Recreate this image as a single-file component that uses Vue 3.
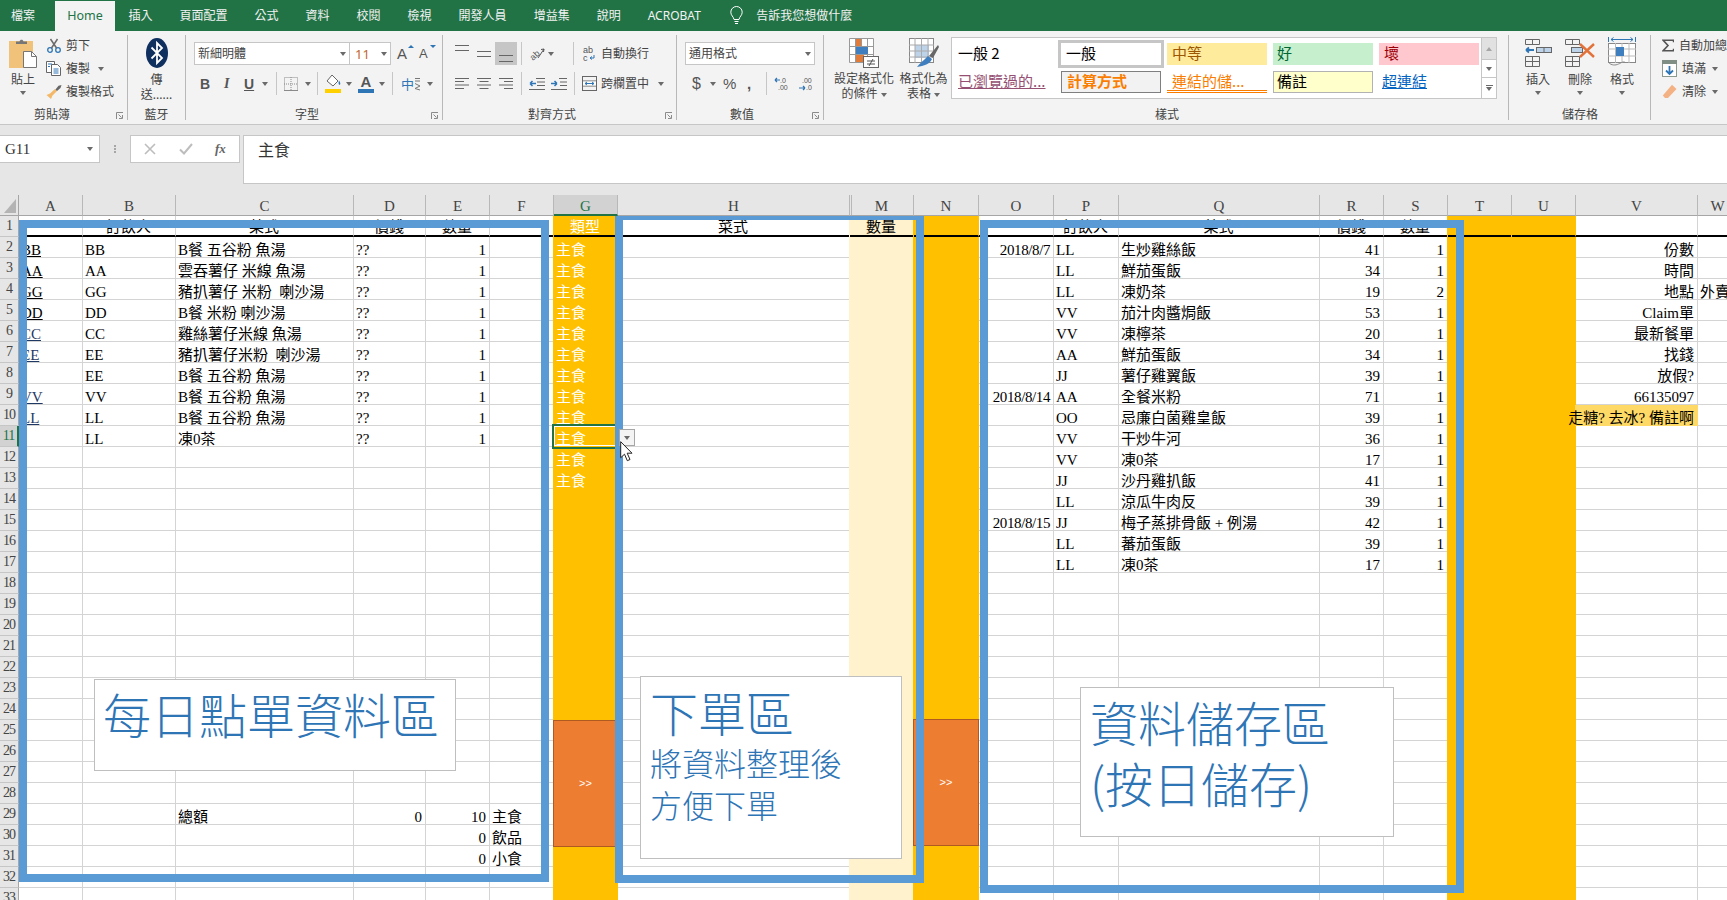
<script setup>
const cols = [
  ['A', 64], ['B', 93], ['C', 178], ['D', 72], ['E', 64], ['F', 64], ['G', 64], ['H', 232], ['M', 64], ['N', 65],
  ['O', 75], ['P', 65], ['Q', 201], ['R', 64], ['S', 64], ['T', 64], ['U', 64], ['V', 122], ['W', 40]
]
const gridCols = { gridTemplateColumns: '19px ' + cols.map((c) => c[1] + 'px').join(' ') }
const left = [
  ['BB', 'BB', 'B餐 五谷粉 魚湯'], ['AA', 'AA', '雲吞薯仔 米線 魚湯'], ['GG', 'GG', '豬扒薯仔 米粉  喇沙湯'],
  ['DD', 'DD', 'B餐 米粉 喇沙湯'], ['CC', 'CC', '雞絲薯仔米線 魚湯'], ['EE', 'EE', '豬扒薯仔米粉  喇沙湯'],
  ['', 'EE', 'B餐 五谷粉 魚湯'], ['VV', 'VV', 'B餐 五谷粉 魚湯'], ['LL', 'LL', 'B餐 五谷粉 魚湯'], ['', 'LL', '凍0茶']
]
const right = [
  ['2018/8/7', 'LL', '生炒雞絲飯', '41', '1'], ['', 'LL', '鮮茄蛋飯', '34', '1'], ['', 'LL', '凍奶茶', '19', '2'],
  ['', 'VV', '茄汁肉醬焗飯', '53', '1'], ['', 'VV', '凍檸茶', '20', '1'], ['', 'AA', '鮮茄蛋飯', '34', '1'],
  ['', 'JJ', '薯仔雞翼飯', '39', '1'], ['2018/8/14', 'AA', '全餐米粉', '71', '1'], ['', 'OO', '忌廉白菌雞皇飯', '39', '1'],
  ['', 'VV', '干炒牛河', '36', '1'], ['', 'VV', '凍0茶', '17', '1'], ['', 'JJ', '沙丹雞扒飯', '41', '1'],
  ['', 'LL', '涼瓜牛肉反', '39', '1'], ['2018/8/15', 'JJ', '梅子蒸排骨飯 + 例湯', '42', '1'], ['', 'LL', '蕃茄蛋飯', '39', '1'],
  ['', 'LL', '凍0茶', '17', '1']
]
const sideV = ['份數', '時間', '地點', 'Claim單', '最新餐單', '找錢', '放假?', '66135097', '走糖? 去冰? 備註啊']

const data = {
  1: { B: '訂飲人', C: '菜式', D: '價錢', E: '數量', G: '類型', H: '菜式', M: '數量', P: '訂飲人', Q: '菜式', R: '價錢', S: '數量' },
  29: { C: '總額', D: '0', E: '10', F: '主食' },
  30: { E: '0', F: '飲品' },
  31: { E: '0', F: '小食' }
}
const put = (r, k, v) => { if (v !== '') { (data[r] = data[r] || {})[k] = v } }
left.forEach((x, i) => { put(i + 2, 'A', x[0]); put(i + 2, 'B', x[1]); put(i + 2, 'C', x[2]); put(i + 2, 'D', '??'); put(i + 2, 'E', '1') })
for (let r = 2; r <= 13; r++) put(r, 'G', '主食')
right.forEach((x, i) => { ['O', 'P', 'Q', 'R', 'S'].forEach((k, j) => put(i + 2, k, x[j])) })
sideV.forEach((t, i) => put(i + 2, 'V', t))
put(4, 'W', '外賣')

const rows = Array.from({ length: 33 }, (_, i) => i + 1)
const text = (r, k) => (data[r] && data[r][k]) || ''
const cellClass = (r, k) => {
  const t = text(r, k)
  return {
    head: r === 1,
    right: r > 1 && (/^[\d/]+$/.test(t) || k === 'V'),
    date: k === 'O',
    gold: k === 'G' || k === 'N' || k === 'T' || k === 'U',
    pale: k === 'M',
    note: k === 'V' && r === 10,
    link: k === 'A' && r > 1,
    navy: k === 'A' && r > 5,
    sel: k === 'G' && r === 11
  }
}
</script>

<template>
  <div class="app">
    <nav class="tabs">
      <span class="tab first">檔案</span>
      <span class="tab home">Home</span>
      <span class="tab">插入</span>
      <span class="tab">頁面配置</span>
      <span class="tab">公式</span>
      <span class="tab">資料</span>
      <span class="tab">校閱</span>
      <span class="tab">檢視</span>
      <span class="tab">開發人員</span>
      <span class="tab">增益集</span>
      <span class="tab">說明</span>
      <span class="tab">ACROBAT</span>
      <svg class="bulb" width="13" height="19" viewBox="0 0 13 19" fill="none" stroke="#fff"><path d="M4 13.5C3.5 10.5.8 9.500.8 6.200a5.700 5.700 0 0 1 11.400 0c0 3.300-2.700 4.300-3.200 7.300z" /><path d="M4.500 15.500h4M5 17.500h3" /></svg>
      <span class="tell">告訴我您想做什麼</span>
    </nav>

    <section class="ribbon">
      <!-- 剪貼簿 -->
      <div class="group w-clip">
        <div class="body flex">
          <div class="bigbtn w46">
            <svg class="mt4" width="28" height="29" viewBox="0 0 28 29">
              <rect x="0" y="2" width="24" height="27" fill="#f1c27a" />
              <path d="M7 5V2.500h3.500C11 0 14 0 14.500 2.500H18V5z" fill="#767676" />
              <path d="M14.500 12.500h8l5 5v11h-13z" fill="#fff" stroke="#767676" />
              <path d="M22.500 12.500v5h5" fill="none" stroke="#767676" />
            </svg>
            <span class="mt4 tl">貼上</span>
            <i class="caret mt4"></i>
          </div>
          <div class="stack">
            <div class="row23">
              <svg width="16" height="15" viewBox="0 0 16 15" fill="none"><circle cx="4" cy="12" r="2.300" stroke="#2e75b6" stroke-width="1.300" /><circle cx="12" cy="12" r="2.300" stroke="#2e75b6" stroke-width="1.300" /><path d="M5.500 10 11.500 1M10.500 10 4.500 1" stroke="#6a6a6a" stroke-width="1.500" /></svg>
              <span class="ml-4">剪下</span>
            </div>
            <div class="row23">
              <svg width="16" height="15" viewBox="0 0 16 15" fill="#fff" stroke="#666"><path d="M.5.500h8v11h-8z" /><path d="M5.500 3.500h6l3 3v8h-9z" /><path d="M7.500 8h5M7.500 10h5M7.500 12h5M2 3h4M2 5.500h2" stroke="#2e75b6" fill="none" /></svg>
              <span class="ml-4">複製</span><i class="caret ml-8"></i>
            </div>
            <div class="row23">
              <svg width="16" height="15" viewBox="0 0 16 15"><path d="M9 5 4 9.500.5 11 5 15l1.500-3.500L11 7z" fill="#f4b869" /><path d="M9.500 5.500 11 7l3.500-3 1-3-3 .8z" fill="#666" /></svg>
              <span class="ml-4">複製格式</span>
            </div>
          </div>
        </div>
        <div class="label ml-34">剪貼簿</div>
        <svg class="launch" width="7" height="7" viewBox="0 0 7 7" fill="none" stroke="#8a8a8a"><path d="M.5 7V.5H7M2.500 2.500l3 3M6.500 3v3.500H3" /></svg>
      </div>

      <!-- 藍牙 -->
      <div class="group w-bt">
        <div class="body">
          <div class="bigbtn">
            <svg class="mt3" width="22" height="30" viewBox="0 0 22 30"><ellipse cx="11" cy="15" rx="11" ry="15" fill="#0f2f5f" /><path d="M5.500 9.500 16 20l-5 5V5l5 5L5.500 20.500" fill="none" stroke="#fff" stroke-width="1.800" /></svg>
            <span class="mt4 tl">傳</span>
            <span class="tl">送......</span>
          </div>
        </div>
        <div class="label center">藍牙</div>
      </div>

      <!-- 字型 -->
      <div class="group w-font">
        <div class="body">
          <div class="rowA">
            <div class="combo w156 ml-8"><span>新細明體</span><i class="caret"></i></div>
            <div class="combo w41 joined"><span class="orange">11</span><i class="caret"></i></div>
            <span class="gauge big ml-6">A<i class="tri up"></i></span>
            <span class="gauge small ml-9">A<i class="tri down"></i></span>
          </div>
          <div class="rowB">
            <b class="fmt ml-14 w9">B</b>
            <i class="fmt serif ml-15 w7">I</i>
            <u class="fmt ml-13 w10">U</u>
            <i class="caret ml-8"></i>
            <i class="vsep ml-8"></i>
            <svg class="ml-7" width="14" height="14" viewBox="0 0 14 14" fill="none" stroke="#8a8a8a" stroke-dasharray="1 1"><path d="M.5.500h13v13H.5zM7 0v14M0 7h14" /><path d="M0 13.500h14" stroke-dasharray="none" /></svg>
            <i class="caret ml-7"></i>
            <i class="vsep ml-6"></i>
            <svg class="ml-7" width="16" height="19" viewBox="0 0 16 19"><path d="M7 1 13 7 8 12 2 7z" fill="#fff" stroke="#666" /><path d="M14 6.500c1.500 2 1.800 4 .5 4.500-1.200-.5-1.200-2.500-.5-4.500z" fill="#2e75b6" /><rect y="15" width="16" height="4" fill="#ffd000" /></svg>
            <i class="caret ml-5"></i>
            <span class="fontcolor ml-6">A<i></i></span>
            <i class="caret ml-5"></i>
            <i class="vsep ml-7"></i>
            <span class="zh ml-8">中</span>
            <svg width="7" height="14" viewBox="0 0 7 14" fill="none" stroke="#777"><path d="M1 1.500h5M1 4h5M1 6.500l5 2.500M6 9 1 11.500 6 13" /></svg>
            <i class="caret ml-6"></i>
          </div>
        </div>
        <div class="label ml-109">字型</div>
        <svg class="launch" width="7" height="7" viewBox="0 0 7 7" fill="none" stroke="#8a8a8a"><path d="M.5 7V.5H7M2.500 2.500l3 3M6.500 3v3.500H3" /></svg>
      </div>

      <!-- 對齊方式 -->
      <div class="group w-align">
        <div class="body">
          <div class="rowA">
            <svg class="ml-12" width="14" height="23" viewBox="0 0 14 23" stroke="#666"><path d="M0 3.500h14M0 8.500h14" /></svg>
            <svg class="ml-8" width="14" height="23" viewBox="0 0 14 23" stroke="#666"><path d="M0 9.500h14M0 14.500h14" /></svg>
            <span class="selbtn ml-4"><svg width="14" height="23" viewBox="0 0 14 23" stroke="#666"><path d="M0 13.500h14M0 19.500h14" /></svg></span>
            <i class="vsep ml-4"></i>
            <svg class="ml-7" width="16" height="16" viewBox="0 0 16 16"><text x="1" y="13" font-size="9" font-family="Liberation Sans" fill="#555" transform="rotate(-42 5 10)">ab</text><path d="M9 12 15 3M15 3l-3 .5M15 3l-.5 3" fill="none" stroke="#555" /></svg>
            <i class="caret ml-3"></i>
            <i class="vsep ml-19"></i>
            <svg class="ml-9" width="12" height="16" viewBox="0 0 12 16"><text x="0" y="7" font-size="9" font-family="Liberation Sans" fill="#555">ab</text><text x="0" y="15" font-size="9" font-family="Liberation Sans" fill="#555">c</text><path d="M11 9v3H7M7 12l2-1.500M7 12l2 1.500" fill="none" stroke="#2e75b6" /></svg>
            <span class="ml-6">自動換行</span>
          </div>
          <div class="rowB">
            <svg class="ml-12" width="14" height="11" viewBox="0 0 14 11" stroke="#666"><path d="M0 .5h14M0 3.500h9M0 7h14M0 10.500h9" /></svg>
            <svg class="ml-8" width="14" height="11" viewBox="0 0 14 11" stroke="#666"><path d="M0 .5h14M2.500 3.500h9M0 7h14M2.500 10.500h9" /></svg>
            <svg class="ml-8" width="14" height="11" viewBox="0 0 14 11" stroke="#666"><path d="M0 .5h14M5 3.500h9M0 7h14M5 10.500h9" /></svg>
            <i class="vsep ml-8"></i>
            <svg class="ml-7" width="16" height="12" viewBox="0 0 16 12" fill="none"><path d="M7 .5h9M8 4h8M8 7.500h8M0 11.500h16" stroke="#666" /><path d="M7 5.500H1M1 5.500l2.500-2.500M1 5.500l2.500 2.500" stroke="#2e75b6" stroke-width="1.500" /></svg>
            <svg class="ml-6" width="16" height="12" viewBox="0 0 16 12" fill="none"><path d="M8 .5h8M9 4h7M9 7.500h7M0 11.500h16" stroke="#666" /><path d="M0 5.500h6M6 5.500 3.500 3M6 5.500 3.500 8" stroke="#2e75b6" stroke-width="1.500" /></svg>
            <i class="vsep ml-7"></i>
            <svg class="ml-7" width="15" height="15" viewBox="0 0 15 15" fill="none"><rect x=".5" y=".5" width="14" height="14" stroke="#666" /><path d="M0 5h15M0 10h15" stroke="#666" /><rect x="1" y="5.500" width="13" height="4" fill="#fff" /><path d="M3 7.500h9M3 7.500l2-1.500M3 7.500 5 9M12 7.500l-2-1.500M12 7.500 10 9" stroke="#2e75b6" /></svg>
            <span class="ml-4">跨欄置中</span>
            <i class="caret ml-9"></i>
          </div>
        </div>
        <div class="label ml-85">對齊方式</div>
        <svg class="launch" width="7" height="7" viewBox="0 0 7 7" fill="none" stroke="#8a8a8a"><path d="M.5 7V.5H7M2.500 2.500l3 3M6.500 3v3.500H3" /></svg>
      </div>

      <!-- 數值 -->
      <div class="group w-num">
        <div class="body">
          <div class="rowA"><div class="combo w130 ml-8"><span>通用格式</span><i class="caret"></i></div></div>
          <div class="rowB">
            <span class="money ml-15">$</span>
            <i class="caret ml-8"></i>
            <span class="money pct ml-7">%</span>
            <b class="comma ml-10">,</b>
            <i class="vsep ml-13"></i>
            <svg class="ml-7" width="15" height="14" viewBox="0 0 15 14"><text x="6" y="6" font-size="7" font-family="Liberation Sans" fill="#555">.0</text><text x="4" y="13" font-size="7" font-family="Liberation Sans" fill="#555">.00</text><path d="M6 3H1M1 3l2-2M1 3l2 2" fill="none" stroke="#2e75b6" stroke-width="1.200" /></svg>
            <svg class="ml-10" width="14" height="14" viewBox="0 0 14 14"><text x="3" y="6" font-size="7" font-family="Liberation Sans" fill="#555">.00</text><text x="7" y="13" font-size="7" font-family="Liberation Sans" fill="#555">.0</text><path d="M0 11h6M6 11 4 9M6 11l-2 2" fill="none" stroke="#2e75b6" stroke-width="1.200" /></svg>
          </div>
        </div>
        <div class="label ml-53">數值</div>
        <svg class="launch" width="7" height="7" viewBox="0 0 7 7" fill="none" stroke="#8a8a8a"><path d="M.5 7V.5H7M2.500 2.500l3 3M6.500 3v3.500H3" /></svg>
      </div>

      <!-- 樣式 -->
      <div class="group w-style">
        <div class="body flex">
          <div class="bigbtn w60 ml-10">
            <svg class="mt3" width="30" height="30" viewBox="0 0 30 30">
              <path d="M.5.500h24v24H.5zM.5 8.500h24M.5 16.500h24M6.500 0v25M12.500 0v25M18.500 0v25" fill="#fff" stroke="#999" />
              <rect x="7" y="1" width="5" height="7" fill="#e07b39" /><rect x="7" y="9" width="12" height="7" fill="#3f7fbf" /><rect x="7" y="17" width="8" height="7" fill="#e07b39" />
              <rect x="14.500" y="18.500" width="15" height="11" fill="#fff" stroke="#666" />
              <path d="M18 23h8M18 26h8M24 21l-4 7" fill="none" stroke="#555" />
            </svg>
            <span class="mt3 tl">設定格式化</span>
            <span class="tl">的條件<i class="caret ml-3"></i></span>
          </div>
          <div class="bigbtn w47 ml-6">
            <svg class="mt3" width="30" height="30" viewBox="0 0 30 30">
              <rect x=".5" y=".5" width="24" height="24" fill="#fff" stroke="#888" />
              <rect x="6" y="7" width="14" height="13" fill="#bdd3ea" />
              <path d="M0 7h25M0 13h25M0 19h25M6 0v25M12.500 0v25M19 0v25" stroke="#aaa" fill="none" />
              <path d="M20 18 29 7l1 2-6 11z" fill="#666" />
              <path d="M19 18l4 3c-2 5-8 7-15 8 2-3 6-6 11-11z" fill="#3f7fbf" />
            </svg>
            <span class="mt3 tl">格式化為</span>
            <span class="tl">表格<i class="caret ml-3"></i></span>
          </div>
          <div class="gallery ml-4">
            <div class="styles">
              <span class="st plain">一般 2</span>
              <span class="st chosen">一般</span>
              <span class="st neutral">中等</span>
              <span class="st good">好</span>
              <span class="st bad">壞</span>
              <span class="st visited">已瀏覽過的...</span>
              <span class="st calc">計算方式</span>
              <span class="st linked">連結的儲...</span>
              <span class="st memo">備註</span>
              <span class="st hyper">超連結</span>
            </div>
            <div class="scroller">
              <span class="sb up"><i class="tri-g"></i></span>
              <span class="sb mid"><i class="caret"></i></span>
              <span class="sb end"><i class="bar"></i><i class="caret"></i></span>
            </div>
          </div>
        </div>
        <div class="label ml-331">樣式</div>
      </div>

      <!-- 儲存格 -->
      <div class="group w-cell">
        <div class="body flex pl8">
          <div class="bigbtn w42">
            <svg class="mt4" width="27" height="28" viewBox="0 0 27 28" fill="none" stroke="#666">
              <path d="M.5.500h14v5H.5zM7.500 0v6M.5 17.500h14v10H.5zM.5 22.500h14M7.500 17v11" />
              <rect x="11.500" y="8.500" width="15" height="5" fill="#bdd3ea" /><path d="M19 8v6" />
              <path d="M9 11H1M1 11l3-2.500M1 11l3 2.500" stroke="#2e75b6" stroke-width="1.800" />
            </svg>
            <span class="mt5 tl">插入</span>
            <i class="caret mt4"></i>
          </div>
          <div class="bigbtn w42">
            <svg class="mt4" width="30" height="28" viewBox="0 0 30 28" fill="none" stroke="#666">
              <path d="M.5.500h14v5H.5zM7.500 0v6M.5 17.500h14v10H.5zM.5 22.500h14M7.500 17v11" />
              <rect x="6.500" y="8.500" width="11" height="5" fill="#bdd3ea" />
              <path d="M15 5l14 13M29 5 15 18" stroke="#e2723a" stroke-width="2.400" />
            </svg>
            <span class="mt5 tl">刪除</span>
            <i class="caret mt4"></i>
          </div>
          <div class="bigbtn w42">
            <svg class="mt2" width="28" height="30" viewBox="0 0 28 30" fill="none" stroke="#888">
              <path d="M.5 0v5M27.500 0v5M3 2.500h22M3 2.500l2.500-2M3 2.500l2.500 2M25 2.500l-2.500-2M25 2.500l-2.500 2" stroke="#2e75b6" />
              <rect x=".5" y="6.500" width="27" height="19" fill="#fff" />
              <path d="M0 12h28M0 19h28M7.500 6v20M14 6v20M21 6v20" stroke="#bbb" />
              <rect x="8" y="10" width="8" height="9" fill="#3f7fbf" stroke="none" />
              <path d="M.5 25.500c3 3 7 3 10 1.500 3-1 4-3 7-1.500" />
            </svg>
            <span class="mt5 tl">格式</span>
            <i class="caret mt4"></i>
          </div>
        </div>
        <div class="label ml-53">儲存格</div>
      </div>

      <!-- 編輯 -->
      <div class="group w-edit">
        <div class="body">
          <div class="stack">
            <div class="row23">
              <svg class="ml-11" width="15" height="15" viewBox="0 0 15 15" fill="none" stroke="#555" stroke-width="2"><path d="M14.500 3.500V1H1.500L7.500 7.500 1.500 14h13v-2.500" /></svg>
              <span class="ml-5 nowrap">自動加總</span>
            </div>
            <div class="row23">
              <svg class="ml-11" width="15" height="17" viewBox="0 0 15 17"><rect x=".5" y=".5" width="14" height="16" fill="#fff" stroke="#8a9a8f" /><rect width="15" height="4" fill="#7f8f85" /><path d="M7.500 6v8M4 10.500l3.500 3.500 3.500-3.500" fill="none" stroke="#2e75b6" stroke-width="1.800" /></svg>
              <span class="ml-5">填滿</span><i class="caret ml-6"></i>
            </div>
            <div class="row23">
              <svg class="ml-11" width="15" height="15" viewBox="0 0 15 15"><path d="M10 .8 14.500 5 6 14H3L.8 11.500z" fill="#f4b183" /></svg>
              <span class="ml-5">清除</span><i class="caret ml-6"></i>
            </div>
          </div>
        </div>
      </div>
    </section>

    <section class="formula">
      <div class="namebox"><span>G11</span><i class="caret"></i></div>
      <div class="dots"><i></i><i></i><i></i></div>
      <div class="actions">
        <svg width="12" height="12" viewBox="0 0 12 12" fill="none" stroke="#bdbdbd" stroke-width="1.600"><path d="M1 1l10 10M11 1 1 11" /></svg>
        <svg width="14" height="12" viewBox="0 0 14 12" fill="none" stroke="#bdbdbd" stroke-width="2"><path d="M1 6.500 5 10.500 13 1" /></svg>
        <span class="fx">fx</span>
      </div>
      <div class="input">主食</div>
    </section>

    <section class="sheet">
      <div class="grid" :style="gridCols">
        <div class="corner"><i></i></div>
        <div v-for="c in cols" :key="c[0]" class="colhead" :class="{ on: c[0] === 'G', dbl: c[0] === 'M' }">{{ c[0] }}</div>
        <template v-for="r in rows" :key="r">
          <div class="rowhead" :class="{ on: r === 11 }">{{ r }}</div>
          <div v-for="c in cols" :key="c[0]" class="cell" :class="cellClass(r, c[0])"><span>{{ text(r, c[0]) }}</span></div>
        </template>
      </div>

      <div class="shapes">
        <div class="arrow a1">&gt;&gt;</div>
        <div class="arrow a2">&gt;&gt;</div>
        <div class="frame f1"></div>
        <div class="frame f2"></div>
        <div class="frame f3"></div>
        <div class="note-box n1"><div class="t48">每日點單資料區</div></div>
        <div class="note-box n2">
          <div class="t48">下單區</div>
          <div class="t32 first">將資料整理後</div>
          <div class="t32">方便下單</div>
        </div>
        <div class="note-box n3">
          <div class="t48 tall">資料儲存區</div>
          <div class="t48 tall">(按日儲存)</div>
        </div>
        <div class="ddbtn"><i class="caret"></i></div>
        <svg class="pointer" width="13" height="21" viewBox="0 0 13 21"><path d="M.7.700v16l3.800-3.500 2.800 6.500 2.700-1.200-2.800-6.300H12z" fill="#fff" stroke="#222" /></svg>
      </div>
    </section>
  </div>
</template>

<style scoped>
.app { width: 1727px; height: 900px; overflow: hidden; font: 12px/16px "Noto Sans", "Noto Sans CJK TC", sans-serif; color: #444; background: #e6e6e6; }
i { font-style: normal; }
.nowrap { white-space: nowrap; }
.flex { display: flex; }

.tabs { height: 31px; background: #217346; display: flex; align-items: center; color: #f2f2f2; }
.tab { padding: 0 13.5px; line-height: 30px; white-space: nowrap; }
.tab.first { padding: 0 20px 0 11px; }
.tab.home { width: 60px; margin-top: 1px; padding: 0; background: #f3f3f3; color: #217346; text-align: center; font-size: 12.5px; }
.bulb { margin-left: 16px; }
.tell { margin-left: 13px; }

.ribbon { height: 94px; box-sizing: border-box; padding-top: 4px; background: #f3f3f3; border-bottom: 1px solid #c6c6c6; display: flex; }
.group { position: relative; height: 85px; box-sizing: border-box; flex: none; border-right: 1px solid #b8b8b8; }
.body { height: 72px; display: flow-root; }
.body.flex { display: flex; }
.label { height: 16px; line-height: 16px; white-space: nowrap; }
.label.center { text-align: center; }
.w-clip { width: 128px; } .w-bt { width: 58px; } .w-font { width: 257px; } .w-align { width: 234px; }
.w-num { width: 147px; } .w-style { width: 685px; } .w-cell { width: 142px; } .w-edit { flex: 1; border: 0; overflow: hidden; }
.launch { position: absolute; right: 4px; top: 77px; }
.pl8 { padding-left: 8px; }

.bigbtn { display: flex; flex-direction: column; align-items: center; flex: none; width: 100%; }
.tl { line-height: 15px; white-space: nowrap; }
.w46 { width: 46px; } .w60 { width: 60px; } .w47 { width: 47px; } .w42 { width: 42px; }
.mt2 { margin-top: 2px; } .mt3 { margin-top: 3px; } .mt4 { margin-top: 4px; } .mt5 { margin-top: 5px; }

.stack { margin-top: -1px; }
.row23 { height: 23px; display: flex; align-items: center; }
.rowA { height: 23px; margin-top: 7px; display: flex; align-items: center; }
.rowB { height: 23px; margin-top: 7px; display: flex; align-items: center; }

.caret { display: inline-block; flex: none; width: 0; height: 0; border: 3.5px solid transparent; border-top: 4px solid #6a6a6a; border-bottom: 0; vertical-align: middle; }
.vsep { display: block; flex: none; width: 1px; height: 23px; background: #c6c6c6; }

.ml-3 { margin-left: 3px; } .ml-4 { margin-left: 4px; } .ml-5 { margin-left: 5px; } .ml-6 { margin-left: 6px; }
.ml-7 { margin-left: 7px; } .ml-8 { margin-left: 8px; } .ml-9 { margin-left: 9px; } .ml-10 { margin-left: 10px; }
.ml-11 { margin-left: 11px; } .ml-12 { margin-left: 12px; } .ml-13 { margin-left: 13px; } .ml-14 { margin-left: 14px; } .ml-15 { margin-left: 15px; }
.ml-19 { margin-left: 19px; } .ml-34 { margin-left: 34px; } .ml-53 { margin-left: 53px; } .ml-85 { margin-left: 85px; }
.ml-109 { margin-left: 109px; } .ml-331 { margin-left: 331px; }

.combo { height: 23px; box-sizing: border-box; background: #fff; border: 1px solid #c6c6c6; display: flex; align-items: center; justify-content: space-between; padding: 0 3px; flex: none; }
.w156 { width: 156px; } .w41 { width: 41px; } .w130 { width: 130px; }
.joined { border-left: 0; padding-left: 5px; }
.orange { color: #c0662a; font-size: 13px; }
.gauge { position: relative; font: 15px/16px "Liberation Sans", sans-serif; color: #555; width: 13px; flex: none; }
.gauge.small { font-size: 13px; }
.tri { position: absolute; right: -4px; top: -1px; width: 0; height: 0; border: 3px solid transparent; }
.tri.up { border-bottom: 3px solid #2e75b6; border-top: 0; }
.tri.down { border-top: 3px solid #2e75b6; border-bottom: 0; }
.fmt { font: bold 14px/16px "Liberation Sans", sans-serif; color: #555; flex: none; }
.fmt.serif { font-family: "Liberation Serif", serif; font-style: italic; }
.w9 { width: 9px; } .w7 { width: 7px; } .w10 { width: 10px; }
.fontcolor { position: relative; width: 16px; height: 19px; flex: none; text-align: center; font: bold 15px/15px "Liberation Sans", sans-serif; color: #555; }
.fontcolor i { position: absolute; left: 0; bottom: 0; width: 16px; height: 4px; background: #2e75b6; }
.zh { color: #2e75b6; font-size: 13px; width: 13px; flex: none; font-family: "Noto Sans CJK TC", sans-serif; }
.selbtn { width: 22px; height: 23px; background: #c6c6c6; display: flex; justify-content: center; flex: none; }
.money { font: 16px/16px "Liberation Sans", sans-serif; color: #555; width: 10px; flex: none; }
.pct { width: 14px; font-size: 15px; }
.comma { font: bold 15px/16px "Liberation Sans", sans-serif; color: #555; width: 6px; flex: none; }

.gallery { width: 546px; height: 62px; margin-top: 2px; box-sizing: border-box; flex: none; background: #fff; border: 1px solid #c6c6c6; display: flex; justify-content: space-between; }
.styles { display: grid; grid-template-columns: repeat(5, 100px); grid-template-rows: 22px 22px; gap: 6px; padding: 5px 0 0 3px; font-size: 15px; color: #000; font-family: "Noto Sans CJK TC", sans-serif; }
.st { display: block; box-sizing: border-box; padding-left: 5px; line-height: 20px; white-space: nowrap; }
.plain { padding-left: 3px; }
.chosen { outline: 3px solid #c6c6c6; outline-offset: 0; }
.neutral { background: #ffeb9c; color: #9c5700; }
.good { background: #c6efce; color: #063; padding-left: 4px; }
.bad { background: #ffc7ce; color: #9c0006; }
.visited { color: #954f72; text-decoration: underline; padding-left: 3px; }
.calc { background: #f2f2f2; border: 1px solid #7f7f7f; color: #fa7d00; font-weight: 700; line-height: 18px; }
.linked { color: #fa7d00; border-bottom: 3px double #fa7d00; line-height: 19px; }
.memo { background: #ffc; border: 1px solid #b2b2b2; line-height: 18px; padding-left: 3px; }
.hyper { color: #0563c1; text-decoration: underline; padding-left: 3px; }
.scroller { width: 14px; border-left: 1px solid #c6c6c6; display: flex; flex-direction: column; }
.sb { display: flex; flex-direction: column; align-items: center; justify-content: center; box-sizing: border-box; }
.sb.up { height: 21px; background: #e1e1e1; }
.sb.mid { height: 19px; border-top: 1px solid #c6c6c6; border-bottom: 1px solid #c6c6c6; }
.sb.end { flex: 1; }
.sb .bar { width: 7px; height: 1px; margin-bottom: 1px; background: #6a6a6a; }
.tri-g { width: 0; height: 0; border: 3.5px solid transparent; border-bottom: 4px solid #a6a6a6; border-top: 0; }

.formula { height: 70px; box-sizing: border-box; padding-top: 10px; display: flex; align-items: flex-start; background: #e6e6e6; }
.namebox { width: 100px; height: 28px; box-sizing: border-box; background: #fff; border: 1px solid #c6c6c6; border-left: 0; display: flex; align-items: center; justify-content: space-between; padding: 0 6px 0 5px; font: 15px "Liberation Serif", serif; color: #333; flex: none; }
.dots { width: 30px; height: 28px; flex: none; display: flex; flex-direction: column; align-items: center; justify-content: center; gap: 1px; }
.dots i { width: 2px; height: 2px; background: #a6a6a6; }
.actions { width: 110px; height: 28px; box-sizing: border-box; background: #fff; border: 1px solid #c6c6c6; display: flex; align-items: center; padding-left: 13px; flex: none; }
.actions svg + svg { margin-left: 23px; }
.fx { margin-left: 22px; font: italic bold 13px "Liberation Serif", serif; color: #666; }
.input { flex: 1; margin-left: 3px; height: 49px; box-sizing: border-box; background: #fff; border: 1px solid #c6c6c6; border-right: 0; padding: 3px 0 0 14px; font: 16px/20px "Noto Sans CJK TC", sans-serif; color: #333; }

.sheet { position: relative; height: 705px; overflow: hidden; background: #fff; }
.grid { display: grid; grid-auto-rows: 21px; font: 15px/14px "Liberation Serif", "Noto Sans CJK TC", serif; color: #000; }
.corner { background: #e6e6e6; border-bottom: 1px solid #a6a6a6; border-right: 1px solid #a6a6a6; position: relative; }
.corner i { position: absolute; right: 2px; bottom: 2px; width: 0; height: 0; border-left: 12px solid transparent; border-bottom: 14px solid #b4b4b4; }
.colhead { background: #e6e6e6; border-right: 1px solid #b8b8b8; border-bottom: 1px solid #a6a6a6; display: flex; align-items: center; justify-content: center; color: #444; box-sizing: border-box; padding-top: 2px; }
.colhead.on { background: #d2d2d2; color: #217346; border-bottom: 2px solid #217346; }
.colhead.dbl { box-shadow: inset 1px 0 0 #e6e6e6, inset 2px 0 0 #b8b8b8; }
.rowhead { background: #e6e6e6; border-right: 1px solid #a6a6a6; border-bottom: 1px solid #c6c6c6; box-sizing: border-box; font-size: 14px; letter-spacing: -1px; display: flex; align-items: center; justify-content: center; color: #444; }
.rowhead.on { color: #217346; border-right: 2px solid #217346; background: #d2d2d2; }
.cell { box-sizing: border-box; border-right: 1px solid #d4d4d4; border-bottom: 1px solid #d4d4d4; display: flex; align-items: flex-end; padding: 0 3px 0 2px; white-space: pre; min-width: 0; }
.cell.right { justify-content: flex-end; }
.cell.date { letter-spacing: -.4px; }
.cell.head { justify-content: center; align-items: center; border-bottom: 2px solid #000; padding-top: 2px; }
.cell.gold { background: #ffc000; border-right-color: #ffc000; border-bottom-color: #ffc000; box-shadow: -1px 0 0 #ffc000; color: #fff; }
.cell.pale { background: #fff2cc; border-right-color: #fff2cc; border-bottom-color: #fff2cc; box-shadow: -1px 0 0 #fff2cc; }
.cell.head.gold, .cell.head.pale { border-bottom-color: #000; }
.cell.note { background: #ffd966; border-right-color: #ffd966; border-bottom-color: #ffd966; box-shadow: -1px 0 0 #ffd966; }
.cell.link { text-decoration: underline; }
.cell.navy { color: #1f3864; }
.cell.sel { outline: 2px solid #217346; outline-offset: 0; box-shadow: inset 0 0 0 1px #fff; position: relative; z-index: 1; }

.shapes { position: absolute; left: 0; right: 0; top: 21px; bottom: 0; overflow: hidden; z-index: 2; }
.frame { position: absolute; box-sizing: border-box; border: 8px solid #5b9bd5; }
.f1 { left: 19px; top: 4px; width: 530px; height: 662px; }
.f2 { left: 615px; top: -4px; width: 309px; height: 671px; }
.f3 { left: 980px; top: 4px; width: 484px; height: 673px; }
.arrow { position: absolute; height: 127px; box-sizing: border-box; background: #ed7d31; border: 1px solid #ae5a21; color: #fff; font: 11px/125px "Liberation Sans", sans-serif; text-align: center; }
.a1 { left: 553px; top: 504px; width: 65px; }
.a2 { left: 913px; top: 503px; width: 66px; }
.note-box { position: absolute; box-sizing: border-box; background: #fff; border: 1px solid #bfbfbf; color: #2e75b6; font-family: "Noto Sans CJK TC", sans-serif; font-weight: 300; white-space: nowrap; }
.n1 { left: 94px; top: 463px; width: 362px; height: 92px; padding: 9px 0 0 8px; }
.n2 { left: 640px; top: 460px; width: 262px; height: 183px; padding: 10px 0 0 9px; }
.n3 { left: 1080px; top: 471px; width: 314px; height: 150px; padding: 3px 0 0 9px; }
.t48 { font-size: 48px; line-height: 48px; }
.t48.tall { line-height: 61px; }
.t32 { font-size: 32px; line-height: 42px; }
.t32.first { margin-top: 6px; }
.ddbtn { position: absolute; left: 619px; top: 213px; width: 16px; height: 17px; box-sizing: border-box; background: #f4f4f4; border: 1px solid #a6a6a6; display: flex; align-items: center; justify-content: center; }
.pointer { position: absolute; left: 620px; top: 225px; }
</style>

<style>
html, body { margin: 0; overflow: hidden; }
</style>
